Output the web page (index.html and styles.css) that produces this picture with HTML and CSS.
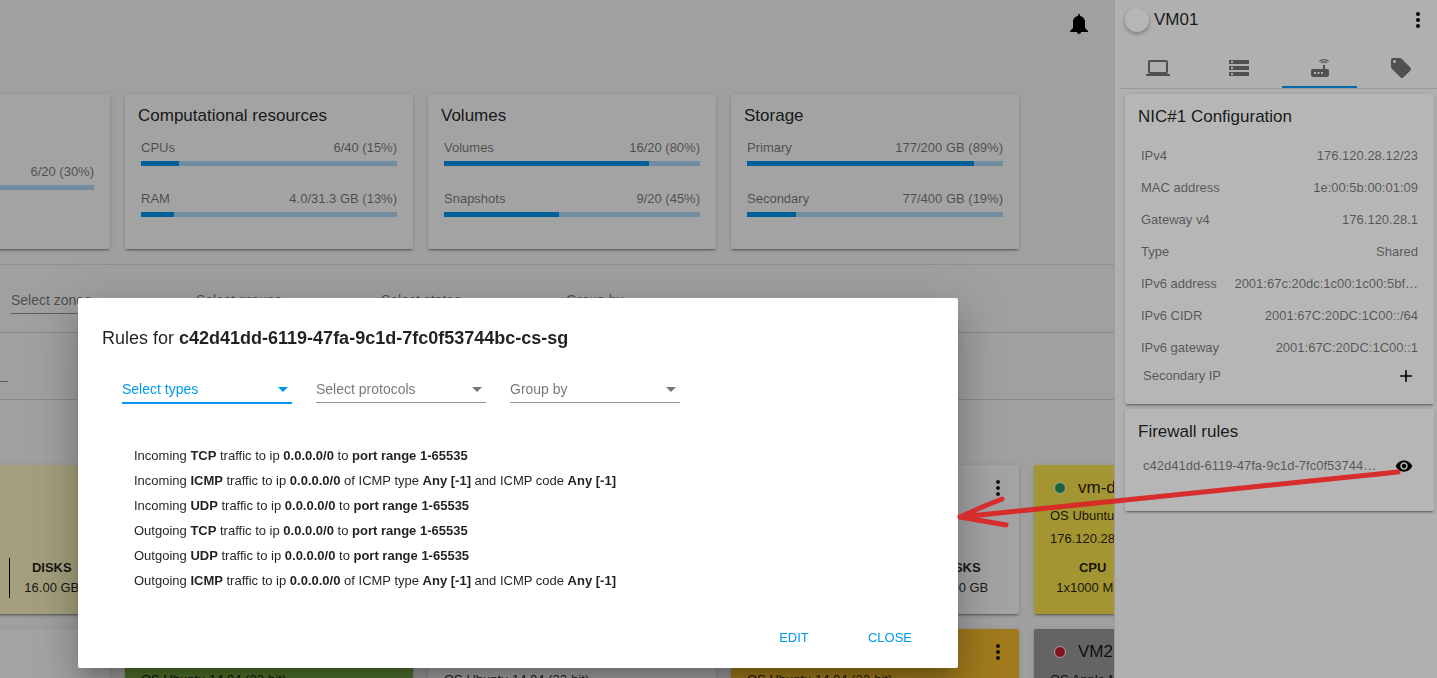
FILE: index.html
```html
<!DOCTYPE html>
<html lang="en">
<head>
<meta charset="utf-8">
<title>Virtual machines</title>
<link rel="stylesheet" href="styles.css">
</head>
<body>
<svg class="defs" aria-hidden="true">
  <symbol id="more" viewBox="0 0 24 24"><path d="M12 8c1.1 0 2-.9 2-2s-.9-2-2-2-2 .9-2 2 .9 2 2 2zm0 2c-1.1 0-2 .9-2 2s.9 2 2 2 2-.9 2-2-.9-2-2-2zm0 6c-1.1 0-2 .9-2 2s.9 2 2 2 2-.9 2-2-.9-2-2-2z"/></symbol>
</svg>
<div class="layout">
  <main class="main">
    <header class="topbar">
      <button class="icon-btn" aria-label="Notifications"><svg class="icon" viewBox="0 0 24 24"><path d="M14 20a2 2 0 0 1-4 0h4M12 2a1 1 0 0 1 1 1v1.080c2.840.480 5 2.940 5 5.920v6l3 3v1H3v-1l3-3v-6c0-2.980 2.160-5.440 5-5.920V3a1 1 0 0 1 1-1z"/></svg></button>
    </header>

    <section class="dashboard">
      <article class="card usage-card usage-card-offset">
        <div class="usage"><div class="usage-text"><span></span><span>6/20 (30%)</span></div><div class="bar"><div class="fill" style="width:30%"></div></div></div>
      </article>
      <article class="card usage-card">
        <h2 class="card-title">Computational resources</h2>
        <div class="usage"><div class="usage-text"><span>CPUs</span><span>6/40 (15%)</span></div><div class="bar"><div class="fill" style="width:15%"></div></div></div>
        <div class="usage"><div class="usage-text"><span>RAM</span><span>4.0/31.3 GB (13%)</span></div><div class="bar"><div class="fill" style="width:13%"></div></div></div>
      </article>
      <article class="card usage-card">
        <h2 class="card-title">Volumes</h2>
        <div class="usage"><div class="usage-text"><span>Volumes</span><span>16/20 (80%)</span></div><div class="bar"><div class="fill" style="width:80%"></div></div></div>
        <div class="usage"><div class="usage-text"><span>Snapshots</span><span>9/20 (45%)</span></div><div class="bar"><div class="fill" style="width:45%"></div></div></div>
      </article>
      <article class="card usage-card">
        <h2 class="card-title">Storage</h2>
        <div class="usage"><div class="usage-text"><span>Primary</span><span>177/200 GB (89%)</span></div><div class="bar"><div class="fill" style="width:88.500%"></div></div></div>
        <div class="usage"><div class="usage-text"><span>Secondary</span><span>77/400 GB (19%)</span></div><div class="bar"><div class="fill" style="width:19%"></div></div></div>
      </article>
    </section>

    <section class="filters">
      <select class="select" aria-label="Select zones"><option>Select zones</option></select>
      <select class="select" aria-label="Select groups"><option>Select groups</option></select>
      <select class="select" aria-label="Select states"><option>Select states</option></select>
      <select class="select" aria-label="Group by"><option>Group by</option></select>
    </section>
    <section class="filters search-row">
      <input class="search" type="text" aria-label="Search">
    </section>

    <section class="vms">
      <article class="card vm cream">
        <div class="vm-head"></div><p class="line"></p><p class="line"></p>
        <div class="stats"><div></div><div></div><div><b>DISKS</b><span>16.00 GB</span></div></div>
      </article>
      <article class="card vm"></article>
      <article class="card vm"></article>
      <article class="card vm">
        <div class="vm-head"><button class="icon-btn vm-more" aria-label="Actions"><svg class="icon"><use href="#more"/></svg></button></div><p class="line"></p><p class="line"></p>
        <div class="stats"><div></div><div></div><div><b>DISKS</b><span>10.00 GB</span></div></div>
      </article>
      <article class="card vm yellow">
        <div class="vm-head"><i class="status running"></i><h3 class="vm-name">vm-debian</h3></div>
        <p class="line">OS Ubuntu 14.04 (32-bit)</p><p class="line">176.120.28.14</p>
        <div class="stats"><div><b>CPU</b><span>1x1000 MHz</span></div><div></div><div></div></div>
      </article>
      <article class="card vm"></article>
      <article class="card vm green"><div class="vm-head"></div><p class="line">OS Ubuntu 14.04 (32-bit)</p></article>
      <article class="card vm"><div class="vm-head"></div><p class="line">OS Ubuntu 14.04 (32-bit)</p></article>
      <article class="card vm amber"><div class="vm-head"><button class="icon-btn vm-more" aria-label="Actions"><svg class="icon"><use href="#more"/></svg></button></div><p class="line">OS Ubuntu 14.04 (32-bit)</p></article>
      <article class="card vm gray"><div class="vm-head"><i class="status stopped"></i><h3 class="vm-name">VM2</h3></div><p class="line">OS Apple Mac OS X 10.6 (32-bit)</p></article>
    </section>
  </main>

  <aside class="sidebar">
    <header class="side-head">
      <i class="avatar"></i><h2 class="side-title">VM01</h2>
      <button class="icon-btn" aria-label="Actions"><svg class="icon"><use href="#more"/></svg></button>
    </header>
    <nav class="tabs">
      <button class="tab" aria-label="Details"><svg class="icon" viewBox="0 0 24 24"><path d="M20 18c1.100 0 1.990-.9 1.990-2L22 6c0-1.100-.9-2-2-2H4c-1.100 0-2 .9-2 2v10c0 1.100.9 2 2 2H0v2h24v-2h-4zM4 6h16v10H4V6z"/></svg></button>
      <button class="tab" aria-label="Storage"><svg class="icon" viewBox="0 0 24 24"><path d="M2 20h20v-4H2v4zm2-3h2v2H4v-2zM2 4v4h20V4H2zm4 3H4V5h2v2zm-4 7h20v-4H2v4zm2-3h2v2H4v-2z"/></svg></button>
      <button class="tab active" aria-label="Network"><svg class="icon" viewBox="0 0 24 24"><path d="M20.200 5.900l.8-.8C19.600 3.700 17.800 3 16 3s-3.600.7-5 2.100l.8.8C13 4.800 14.500 4.200 16 4.200s3 .6 4.200 1.700zm-.9.800c-.9-.9-2.100-1.400-3.300-1.400s-2.400.5-3.300 1.400l.8.8c.7-.7 1.600-1 2.500-1s1.800.3 2.500 1l.8-.8zM19 13h-2V9h-2v4H5c-1.100 0-2 .9-2 2v4c0 1.100.9 2 2 2h14c1.100 0 2-.9 2-2v-4c0-1.100-.9-2-2-2zM8 18H6v-2h2v2zm3.500 0h-2v-2h2v2zm3.500 0h-2v-2h2v2z"/></svg></button>
      <button class="tab" aria-label="Tags"><svg class="icon" viewBox="0 0 24 24"><path d="M21.410 11.580l-9-9C12.050 2.220 11.550 2 11 2H4c-1.100 0-2 .9-2 2v7c0 .55.220 1.050.590 1.420l9 9c.36.36.86.58 1.410.58s1.050-.22 1.410-.59l7-7c.37-.36.59-.86.59-1.410s-.23-1.060-.59-1.420zM5.500 7C4.670 7 4 6.330 4 5.500S4.670 4 5.500 4 7 4.670 7 5.500 6.330 7 5.500 7z"/></svg></button>
    </nav>
    <section class="card side-card">
      <h2 class="card-title">NIC#1 Configuration</h2>
      <dl class="props">
        <div><dt>IPv4</dt><dd>176.120.28.12/23</dd></div>
        <div><dt>MAC address</dt><dd>1e:00:5b:00:01:09</dd></div>
        <div><dt>Gateway v4</dt><dd>176.120.28.1</dd></div>
        <div><dt>Type</dt><dd>Shared</dd></div>
        <div><dt>IPv6 address</dt><dd>2001:67c:20dc:1c00:1c00:5bf…</dd></div>
        <div><dt>IPv6 CIDR</dt><dd>2001:67C:20DC:1C00::/64</dd></div>
        <div><dt>IPv6 gateway</dt><dd>2001:67C:20DC:1C00::1</dd></div>
      </dl>
      <div class="action-row"><span>Secondary IP</span><button class="icon-btn" aria-label="Add secondary IP"><svg class="icon small" viewBox="0 0 24 24"><path d="M19 13h-6v6h-2v-6H5v-2h6V5h2v6h6v2z"/></svg></button></div>
    </section>
    <section class="card side-card firewall">
      <h2 class="card-title">Firewall rules</h2>
      <div class="action-row"><span>c42d41dd-6119-47fa-9c1d-7fc0f53744…</span><button class="icon-btn" aria-label="View rules"><svg class="icon eye" viewBox="0 0 24 24"><path d="M12 4.500C7 4.500 2.730 7.610 1 12c1.730 4.390 6 7.500 11 7.500s9.270-3.110 11-7.500c-1.730-4.390-6-7.500-11-7.500zM12 17c-2.760 0-5-2.240-5-5s2.240-5 5-5 5 2.240 5 5-2.240 5-5 5zm0-8c-1.660 0-3 1.340-3 3s1.340 3 3 3 3-1.340 3-3-1.340-3-3-3z"/></svg></button></div>
    </section>
  </aside>
</div>

<div class="backdrop"></div>
<div class="dialog" role="dialog" aria-labelledby="dialog-title">
  <h1 class="dialog-title" id="dialog-title">Rules for <b>c42d41dd-6119-47fa-9c1d-7fc0f53744bc-cs-sg</b></h1>
  <div class="dialog-filters">
    <div class="field current"><select class="select" aria-label="Select types"><option>Select types</option></select></div>
    <div class="field"><select class="select" aria-label="Select protocols"><option>Select protocols</option></select></div>
    <div class="field"><select class="select" aria-label="Group by"><option>Group by</option></select></div>
  </div>
  <ul class="rules">
    <li>Incoming <b>TCP</b> traffic to ip <b>0.0.0.0/0</b> to <b>port range 1-65535</b></li>
    <li>Incoming <b>ICMP</b> traffic to ip <b>0.0.0.0/0</b> of ICMP type <b>Any [-1]</b> and ICMP code <b>Any [-1]</b></li>
    <li>Incoming <b>UDP</b> traffic to ip <b>0.0.0.0/0</b> to <b>port range 1-65535</b></li>
    <li>Outgoing <b>TCP</b> traffic to ip <b>0.0.0.0/0</b> to <b>port range 1-65535</b></li>
    <li>Outgoing <b>UDP</b> traffic to ip <b>0.0.0.0/0</b> to <b>port range 1-65535</b></li>
    <li>Outgoing <b>ICMP</b> traffic to ip <b>0.0.0.0/0</b> of ICMP type <b>Any [-1]</b> and ICMP code <b>Any [-1]</b></li>
  </ul>
  <div class="dialog-actions"><button class="text-btn">EDIT</button><button class="text-btn">CLOSE</button></div>
</div>
<svg class="pointer" viewBox="0 0 450 66" aria-hidden="true"><path d="M443 9 L5 54 M47 36 Q26 44 5 54 L51 62"/></svg>
</body>
</html>
```
FILE: styles.css
```css
* { box-sizing: border-box; }
body {
  margin: 0;
  height: 100vh;
  overflow: hidden;
  background: #fafafa;
  color: rgba(0, 0, 0, .87);
  font: 13px/20px "Liberation Sans", Arial, sans-serif;
}
h1, h2, h3, p, ul, dl, dd { margin: 0; padding: 0; }
button { border: 0; padding: 0; background: none; font: inherit; color: #000; cursor: pointer; }
.defs { position: absolute; width: 0; height: 0; }
.icon { display: block; width: 24px; height: 24px; fill: currentColor; }
.icon.small { width: 20px; height: 20px; }
.icon.eye { width: 18px; height: 18px; }
.icon-btn { flex: none; }

.layout { display: flex; height: 100%; }
.main { position: relative; flex: 1; min-width: 0; overflow: hidden; }
.main::after { content: ""; position: absolute; inset: 0; background: rgba(0, 0, 0, .1); pointer-events: none; }
.topbar { display: flex; justify-content: flex-end; align-items: flex-start; height: 94px; padding: 12px 23px; }

.card {
  background: #fff;
  border-radius: 2px;
  box-shadow: 0 3px 1px -2px rgba(0, 0, 0, .2), 0 2px 2px 0 rgba(0, 0, 0, .14), 0 1px 5px 0 rgba(0, 0, 0, .12);
}
.card-title { padding: 0 13px; font-size: 17px; line-height: 20px; font-weight: 400; }

.dashboard {
  display: grid;
  grid-template-columns: repeat(4, 288px);
  gap: 15px;
  padding-bottom: 15px;
  border-bottom: 1px solid #e0e0e0;
}
.dashboard, .vms { padding-left: 15px; margin-left: -193px; }
.usage-card { height: 155px; padding-top: 12px; }
.usage-card-offset { padding-top: 70px; }
.usage { padding: 0 16px; }
.usage-card .card-title { margin-bottom: 14px; }
.usage + .usage { margin-top: 25px; }
.usage-text { display: flex; justify-content: space-between; line-height: 16px; color: rgba(0, 0, 0, .54); margin-bottom: 5px; }
.bar { height: 5px; background: #b3dbfb; }
.fill { height: 100%; background: #0097f0; }

.filters { display: flex; gap: 15px; height: 68px; padding: 22px 11px 0; border-bottom: 1px solid #d6d6d6; }
.search-row { height: 67px; margin-left: -173px; }
.select {
  display: block;
  width: 170px;
  height: 27px;
  padding: 0;
  border: 0;
  border-bottom: 1px solid rgba(0, 0, 0, .42);
  border-radius: 0;
  background: none;
  appearance: none;
  color: rgba(0, 0, 0, .54);
  font: 14px/26px "Liberation Sans", Arial, sans-serif;
}
.search { width: 170px; height: 27px; padding: 0; border: 0; border-bottom: 1px solid rgba(0, 0, 0, .42); background: none; }

.vms { display: grid; grid-template-columns: repeat(5, 288px); gap: 15px; padding-top: 65px; }
.vm { min-height: 149px; padding: 10px 16px 16px; }
.vm-head { display: flex; align-items: center; gap: 12px; height: 25px; margin-bottom: 4px; padding-left: 4px; }
.vm-name { font-size: 17px; font-weight: 400; }
.vm-more { margin: 0 -7px 0 auto; color: rgba(0, 0, 0, .87); }
.status { width: 12px; height: 12px; border: 1px solid #fff; border-radius: 50%; }
.running { background: #2e9a50; }
.stopped { background: #c8202c; }
.line { height: 23px; line-height: 23px; white-space: nowrap; }
.stats { display: grid; grid-template-columns: repeat(3, 1fr); height: 40px; margin-top: 8px; text-align: center; }
.stats div + div { border-left: 1px solid #000; }
.stats b, .stats span { display: block; white-space: nowrap; }
.cream { background: #fff9c4; }
.yellow { background: #ffeb4e; }
.green { background: #7cb342; }
.amber { background: #fbc02d; }
.gray { background: #9e9e9e; }

.sidebar { position: relative; width: 323px; padding-left: 5px; overflow: hidden; background: #f7f7f7; border-left: 1px solid #dedede; }
.side-head { display: flex; align-items: center; height: 48px; padding: 0 7px 9px 5px; }
.avatar { width: 24px; height: 24px; border-radius: 50%; background: #fff; box-shadow: 0 2px 4px rgba(0, 0, 0, .3); }
.side-title { flex: 1; padding-left: 5px; font-size: 17px; font-weight: 400; }
.tabs { display: flex; gap: 6px; height: 41px; border-bottom: 1px solid #d8d8d8; }
.tab { display: grid; place-items: center; flex: none; width: 75px; padding-top: 2px; color: rgba(0, 0, 0, .54); border-bottom: 2px solid transparent; }
.tab.active { border-color: #0097f0; }
.side-card { margin: 5px 3px 0 5px; padding: 13px 0 16px; }
.props { margin-top: 13px; padding: 0 16px; line-height: 32px; color: rgba(0, 0, 0, .54); }
.props div { display: flex; justify-content: space-between; white-space: nowrap; }
.action-row { display: flex; align-items: center; justify-content: space-between; height: 24px; padding: 0 18px; color: rgba(0, 0, 0, .54); white-space: nowrap; }
.firewall { padding-bottom: 33px; }
.firewall .action-row { margin-top: 12px; padding-right: 21px; }

.backdrop { position: fixed; inset: 0; background: rgba(0, 0, 0, .288); }
.dialog {
  position: absolute;
  left: 78px;
  top: 298px;
  width: 880px;
  padding: 28px 24px 12px;
  border-radius: 2px;
  background: #fff;
  box-shadow: 0 11px 15px -7px rgba(0, 0, 0, .2), 0 24px 38px 3px rgba(0, 0, 0, .14), 0 9px 46px 8px rgba(0, 0, 0, .12);
}
.dialog-title { font-size: 18px; line-height: 24px; font-weight: 400; }
.dialog-filters { display: flex; gap: 24px; height: 93px; padding: 26px 20px 0; }
.field { position: relative; height: 28px; }
.field::after {
  content: "";
  position: absolute;
  right: 4px;
  top: 11px;
  border: 5px solid transparent;
  border-top-color: rgba(0, 0, 0, .54);
  border-bottom: 0;
  pointer-events: none;
}
.current .select { height: 28px; color: #0097f0; border-bottom: 2px solid #0097f0; }
.current::after { border-top-color: #0097f0; }
.rules { padding: 0 32px; line-height: 25px; list-style: none; }
.dialog-actions { display: flex; justify-content: flex-end; gap: 8px; margin-top: 27px; }
.text-btn { width: 88px; height: 36px; color: #0097f0; }
.pointer { position: absolute; left: 955px; top: 463px; width: 450px; height: 66px; pointer-events: none; }
.pointer path { fill: none; stroke: #d92626; stroke-width: 5; stroke-linecap: round; stroke-linejoin: round; opacity: .95; }
```
